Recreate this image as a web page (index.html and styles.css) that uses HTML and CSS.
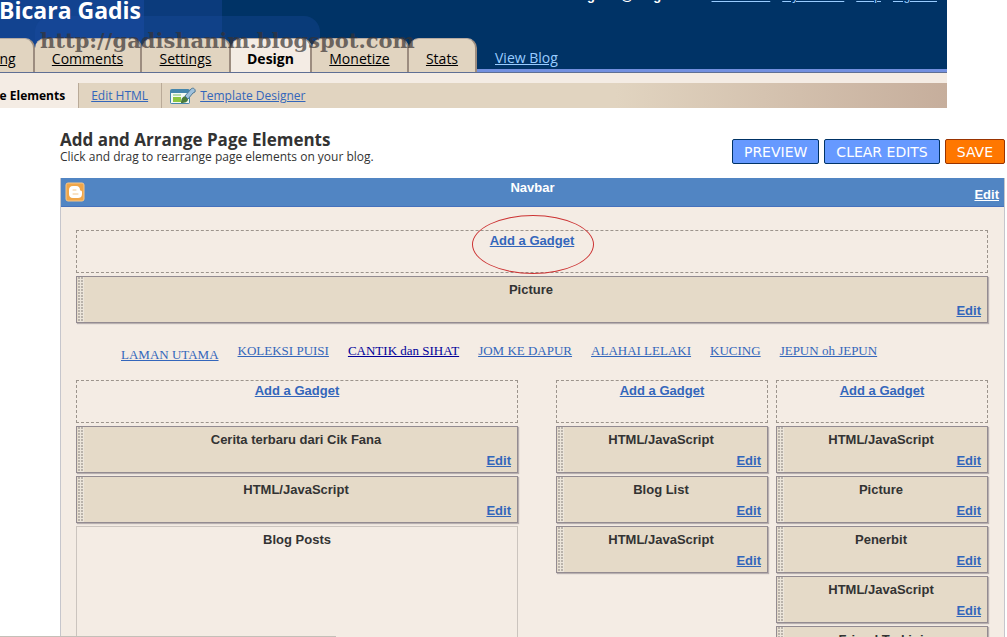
FILE: index.html
```html
<!DOCTYPE html>
<html lang="en">
<head>
    <meta charset="utf-8">
    <title>Bicara Gadis - Page Elements</title>
    <link rel="stylesheet" href="styles.css">
</head>
<body>
    <header class="header">
        <div class="account">
            <strong>cikgadis@blog.com</strong>
            <nav class="account-links">
                <a href="#">Dashboard</a>
                <a href="#">My Account</a>
                <a href="#">Help</a>
                <a href="#">Sign out</a>
            </nav>
        </div>
        <h1>Bicara Gadis</h1>
        <nav class="tabs">
            <a class="tab tab-posting" href="#">Posting</a>
            <a class="tab tab-comments" href="#">Comments</a>
            <a class="tab tab-settings" href="#">Settings</a>
            <a class="tab tab-design active" href="#">Design</a>
            <a class="tab tab-monetize" href="#">Monetize</a>
            <a class="tab tab-stats" href="#">Stats</a>
            <a class="view-blog" href="#">View Blog</a>
        </nav>
        <span class="watermark">http://gadishanim.blogspot.com</span>
    </header>
    <nav class="subnav">
        <a class="sub current" href="#">Page Elements</a>
        <a class="sub" href="#">Edit HTML</a>
        <a class="sub designer" href="#">
            <svg width="26" height="18" viewBox="0 0 26 18">
                <rect x="0" y="2" width="20" height="15" rx="2" fill="#4486ac"/>
                <rect x="1" y="6" width="18" height="10" fill="#f4faf4"/>
                <rect x="3" y="7" width="8" height="2" fill="#b9dcb0"/>
                <rect x="3" y="10" width="8" height="5" fill="#8dc63f"/>
                <path d="M11 16c0-5 2-6 4-7l3 3c0 3-3 4-7 4z" fill="#4a7a3a"/>
                <path d="M15 9l6-7c2-2 5 0 4 3l-2 1-5 6z" fill="#9fc1dc" stroke="#4f7894"/>
            </svg>
            <span>Template Designer</span>
        </a>
    </nav>

    <main class="main">
        <div class="title-row">
            <div>
                <h2>Add and Arrange Page Elements</h2>
                <p>Click and drag to rearrange page elements on your blog.</p>
            </div>
            <div class="buttons">
                <button type="button">PREVIEW</button>
                <button type="button">CLEAR EDITS</button>
                <button type="button" class="save">SAVE</button>
            </div>
        </div>

        <div class="layout">
            <div class="navbar">
                <svg class="logo" width="20" height="20" viewBox="0 0 20 20">
                    <rect x="1" y="1" width="18" height="18" rx="2" fill="#f0a649" stroke="#f6c78b"/>
                    <path d="M8 4h3c3 0 4 2 4 4 0 1 2 0 2 2v2c0 3-2 4-4 4H8c-3 0-4-2-4-4V8c0-2 1-4 4-4z" fill="#fff"/>
                    <path d="M8 8h3M8 12h5" stroke="#f4c68a" stroke-linecap="round"/>
                </svg>
                <span>Navbar</span>
                <a href="#">Edit</a>
            </div>
            <div class="layout-body">
                <div class="add"><a class="circled" href="#">Add a Gadget</a></div>
                <div class="widget"><span>Picture</span><a href="#">Edit</a></div>

                <nav class="pages">
                    <a class="home" href="#">LAMAN UTAMA</a>
                    <a href="#">KOLEKSI PUISI</a>
                    <a class="dark" href="#">CANTIK dan SIHAT</a>
                    <a href="#">JOM KE DAPUR</a>
                    <a href="#">ALAHAI LELAKI</a>
                    <a href="#">KUCING</a>
                    <a href="#">JEPUN oh JEPUN</a>
                </nav>

                <div class="columns">
                    <div class="column">
                        <div class="add"><a href="#">Add a Gadget</a></div>
                        <div class="widget"><span>Cerita terbaru dari Cik Fana</span><a href="#">Edit</a></div>
                        <div class="widget"><span>HTML/JavaScript</span><a href="#">Edit</a></div>
                        <div class="posts">Blog Posts</div>
                    </div>
                    <div class="sidebars">
                        <div class="column">
                            <div class="add"><a href="#">Add a Gadget</a></div>
                            <div class="widget"><span>HTML/JavaScript</span><a href="#">Edit</a></div>
                            <div class="widget"><span>Blog List</span><a href="#">Edit</a></div>
                            <div class="widget"><span>HTML/JavaScript</span><a href="#">Edit</a></div>
                        </div>
                        <div class="column">
                            <div class="add"><a href="#">Add a Gadget</a></div>
                            <div class="widget"><span>HTML/JavaScript</span><a href="#">Edit</a></div>
                            <div class="widget"><span>Picture</span><a href="#">Edit</a></div>
                            <div class="widget"><span>Penerbit</span><a href="#">Edit</a></div>
                            <div class="widget"><span>HTML/JavaScript</span><a href="#">Edit</a></div>
                            <div class="widget"><span>Friend Terkini</span></div>
                        </div>
                    </div>
                </div>
            </div>
        </div>
    </main>
    <div class="status"></div>
</body>
</html>
```
FILE: styles.css
```css
* {
    box-sizing: border-box;
}
body {
    margin: 0;
    height: 100vh;
    overflow: hidden;
    background: #fff;
    color: #333;
    font-family: "Liberation Sans", Arial, sans-serif;
    font-size: 13px;
}
h1, h2, p {
    margin: 0;
}
a {
    color: #36b;
}

/* header */
.header {
    position: relative;
    height: 73px;
    margin-right: 60px;
    overflow: hidden;
    border-bottom: 1px solid #5f6f94;
    background: linear-gradient(90deg, #124390 144px, #0b3b7c 144px, #0b3b7c 222px, #036 222px);
}
.header::before {
    content: "";
    position: absolute;
    left: 35px;
    top: 16px;
    width: 285px;
    height: 80px;
    border-radius: 16px;
    background: rgba(30, 80, 165, 0.3);
}
.header h1 {
    position: relative;
    height: 38px;
    margin-left: -1px;
    color: #fff;
    font: bold 23px/20px "Open Sans", sans-serif;
}
.account {
    position: absolute;
    top: -12px;
    right: 10px;
    display: flex;
    gap: 20px;
    color: #fff;
    line-height: 16px;
}
.account-links {
    display: flex;
    gap: 12px;
    font-size: 12px;
}
.account a, .view-blog {
    color: #9cf;
}
.tabs {
    position: relative;
    display: flex;
    height: 35px;
    padding-left: 0;
    margin-left: -50px;
    box-shadow: inset 0 -4px #7390df;
    font: 14px/40px "Open Sans", sans-serif;
    text-align: center;
}
.tab {
    height: 34px;
    border-right: 2px solid #9c8c7f;
    border-top: 1px solid #b5aaa2;
    border-radius: 10px 10px 0 0;
    background: #e1d4c0;
    color: #000;
}
.tab-posting {
    width: 85px;
}
.tab-comments {
    width: 107px;
}
.tab-settings {
    width: 89px;
}
.tab-design {
    width: 81px;
}
.tab-monetize {
    width: 97px;
}
.tab-stats {
    width: 68px;
}
.tab.active {
    height: 35px;
    background: #f4ece4;
    font-weight: bold;
    text-decoration: none;
}
.view-blog {
    margin-left: 18px;
}
.watermark {
    position: absolute;
    left: 40px;
    top: 28px;
    color: rgba(55, 50, 50, 0.7);
    font: bold 21px/26px "DejaVu Serif", serif;
}

/* sub navigation */
.subnav {
    display: flex;
    height: 35px;
    margin-right: 60px;
    padding-top: 10px;
    overflow: hidden;
    background: linear-gradient(90deg, #e1d4c0 65%, #c6ae9c) 0 10px no-repeat #f4ece4;
    font: 12px/26px "Open Sans", sans-serif;
}
.sub {
    display: flex;
    align-items: center;
    padding: 0 13px 0 12px;
    border-right: 1px solid #b9aa98;
    white-space: nowrap;
}
.sub.current {
    margin-left: -34px;
    background: #f4ece4;
    color: #000;
    font-weight: bold;
    text-decoration: none;
}
.sub.designer {
    gap: 4px;
    padding-left: 8px;
    border: none;
}

/* title */
.main {
    margin: 22px 2px 0 60px;
}
.title-row {
    display: flex;
    justify-content: space-between;
    height: 48px;
}
h2 {
    font: bold 17px/20px "Open Sans", sans-serif;
}
.title-row p {
    font: 12px/14px "Open Sans", sans-serif;
}
.buttons {
    display: flex;
    gap: 5px;
    padding-top: 9px;
}
.buttons button {
    height: 25px;
    padding: 0 11px;
    border: 1px solid #036;
    border-radius: 2px;
    background: #69f;
    color: #fff;
    font: 14px "DejaVu Sans", sans-serif;
}
.buttons .save {
    border-color: #930;
    background: #f70;
}

/* layout editor */
.layout {
    border: 1px solid #c6c6cc;
    border-top: none;
    background: #f4ece4;
    font-weight: bold;
    text-align: center;
}
.navbar {
    position: relative;
    height: 29px;
    padding-top: 2px;
    border-bottom: 1px solid #4571bc;
    background: #5185c3;
    color: #fff;
    line-height: 16px;
}
.navbar .logo {
    position: absolute;
    left: 4px;
    top: 4px;
}
.navbar a {
    position: absolute;
    right: 5px;
    bottom: 3px;
    color: #fff;
}
.layout-body {
    padding: 23px 16px 0 15px;
}
.add {
    height: 43px;
    margin-bottom: 3px;
    border: 1px dashed #9c948c;
    line-height: 20px;
}
.circled {
    position: relative;
}
.circled::after {
    content: "";
    position: absolute;
    left: 50%;
    top: -18px;
    width: 120px;
    height: 57px;
    margin-left: -60px;
    border: 1px solid #c33;
    border-radius: 50%;
}
.widget {
    position: relative;
    height: 47px;
    margin-bottom: 3px;
    padding: 4px 2px 0 0;
    border: 1px solid #938b91;
    background: #e5dac8;
    box-shadow: 1px 1px 1px #b8b0b0;
    line-height: 18px;
}
.widget::before {
    content: "";
    position: absolute;
    left: 1px;
    top: 0;
    bottom: 0;
    width: 6px;
    background: radial-gradient(circle at 1px 1px, #bab3ab 1px, #ece5da 1px) 0 0 / 3px 3px;
}
.widget a {
    position: absolute;
    right: 6px;
    bottom: 2px;
}
.pages {
    display: flex;
    gap: 19px;
    height: 54px;
    padding: 16px 0 0 45px;
    font: 13px/18px "Liberation Serif", serif;
    white-space: nowrap;
}
.pages .home {
    padding-top: 4px;
}
.pages .dark {
    color: #009;
}
.columns {
    display: flex;
    gap: 38px;
}
.columns > .column {
    flex: 1;
}
.sidebars {
    flex: 0 0 432px;
    display: grid;
    grid-template-columns: 1fr 1fr;
    gap: 8px;
}
.posts {
    height: 300px;
    padding-top: 4px;
    border: 1px solid #cbc4be;
    line-height: 18px;
}
.status {
    position: fixed;
    left: 0;
    bottom: 0;
    width: 336px;
    height: 1px;
    background: #c4c0b8;
}
```
